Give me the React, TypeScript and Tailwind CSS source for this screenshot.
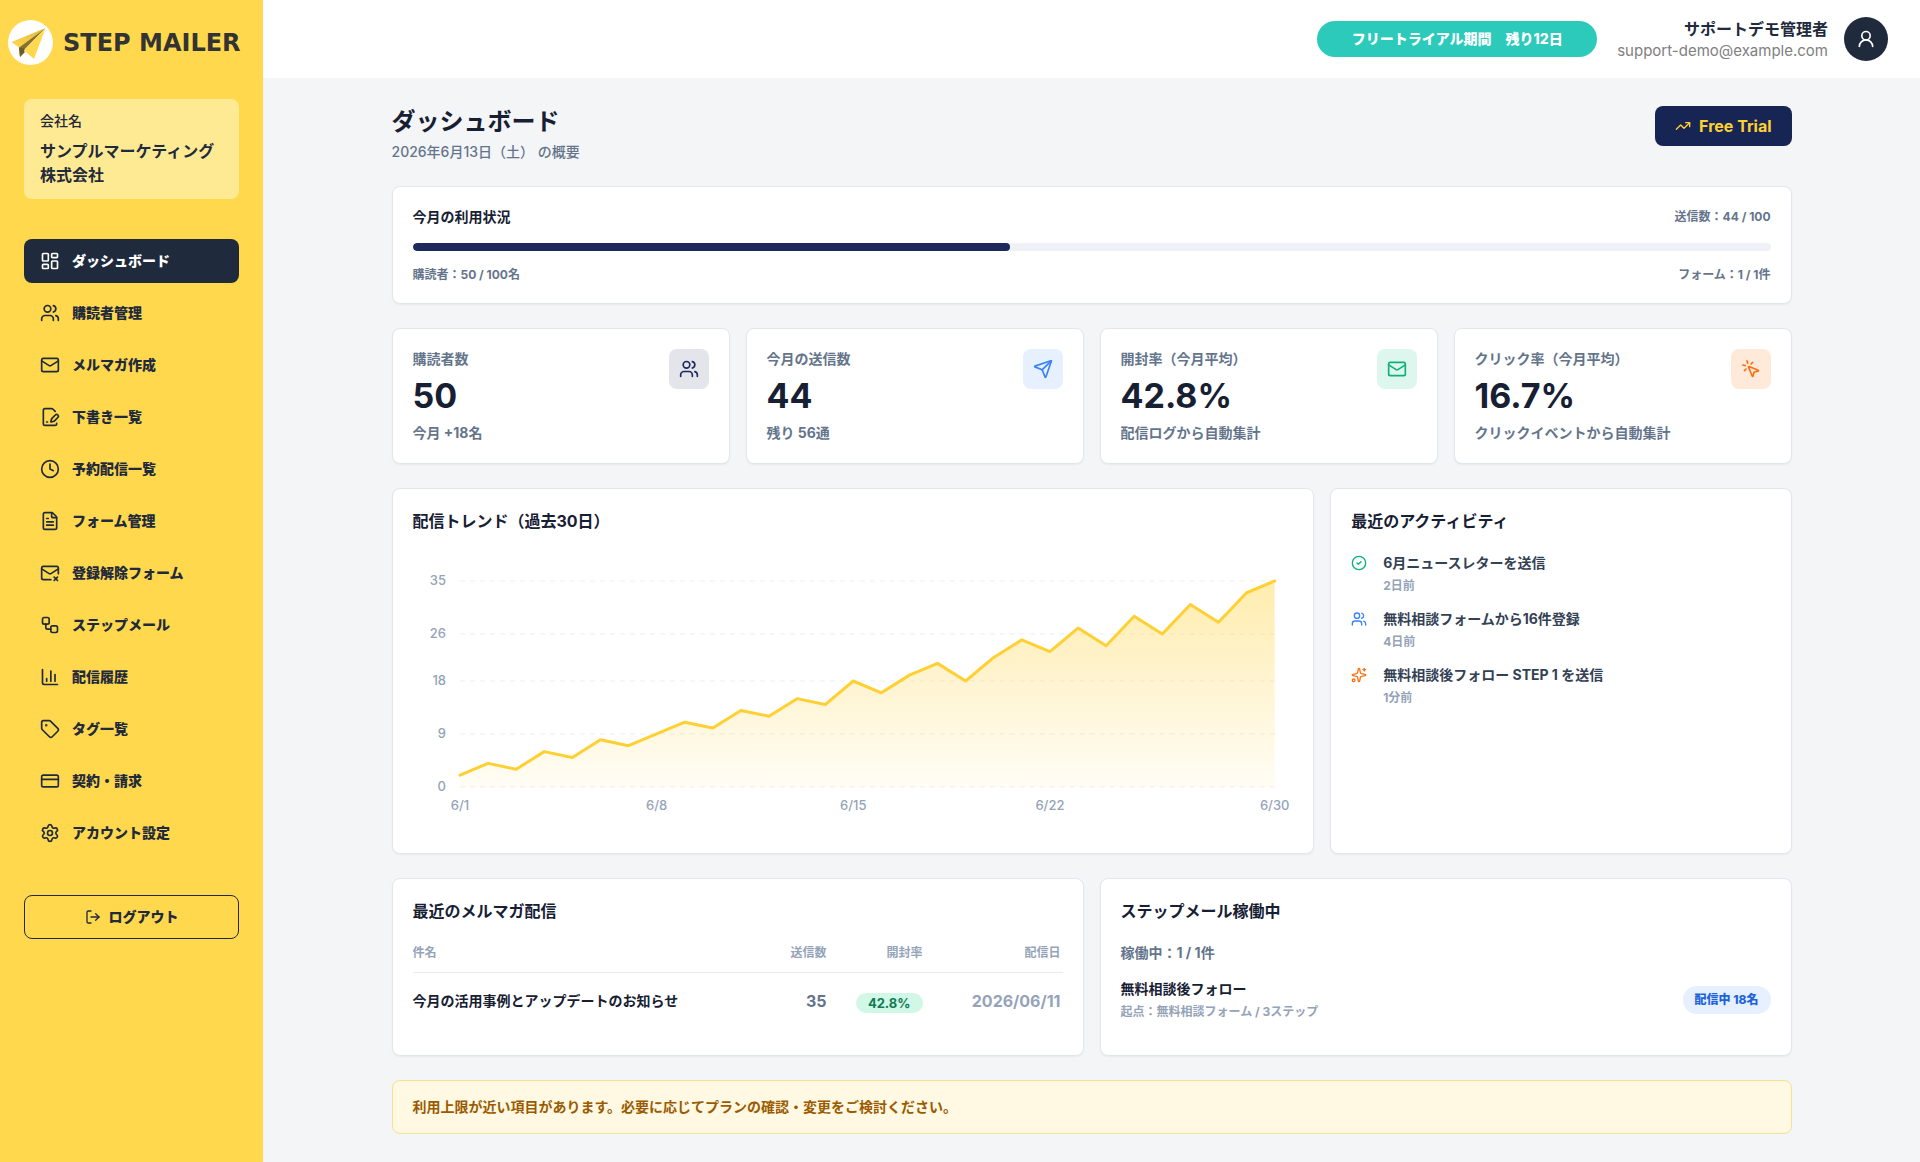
import {
  ChartColumn,
  CircleCheck,
  Clock,
  CreditCard,
  FilePenLine,
  FileText,
  LayoutDashboard,
  LogOut,
  Mail,
  MailX,
  MousePointerClick,
  Send,
  Settings,
  Sparkles,
  Tag,
  TrendingUp,
  UserRound,
  Users,
  Workflow,
} from 'lucide-react';

const navItems = [
  { icon: LayoutDashboard, label: 'ダッシュボード', path: '#dashboard' },
  { icon: Users, label: '購読者管理', path: '#subscribers' },
  { icon: Mail, label: 'メルマガ作成', path: '#compose' },
  { icon: FilePenLine, label: '下書き一覧', path: '#drafts' },
  { icon: Clock, label: '予約配信一覧', path: '#scheduled' },
  { icon: FileText, label: 'フォーム管理', path: '#forms' },
  { icon: MailX, label: '登録解除フォーム', path: '#unsubscribe' },
  { icon: Workflow, label: 'ステップメール', path: '#steps' },
  { icon: ChartColumn, label: '配信履歴', path: '#history' },
  { icon: Tag, label: 'タグ一覧', path: '#tags' },
  { icon: CreditCard, label: '契約・請求', path: '#billing' },
  { icon: Settings, label: 'アカウント設定', path: '#account' },
];

const stats = [
  { label: '購読者数', value: '50', note: '今月 +18名', icon: Users, tone: 'bg-[#e4e5eb] text-[#1e2a5e]' },
  { label: '今月の送信数', value: '44', note: '残り 56通', icon: Send, tone: 'bg-[#e6f0ff] text-[#3b82f6]' },
  { label: '開封率（今月平均）', value: '42.8%', note: '配信ログから自動集計', icon: Mail, tone: 'bg-[#def7ee] text-[#10b07a]' },
  { label: 'クリック率（今月平均）', value: '16.7%', note: 'クリックイベントから自動集計', icon: MousePointerClick, tone: 'bg-[#ffe9d9] text-[#f97316]' },
];

const activities = [
  { icon: CircleCheck, color: 'text-[#10b07a]', text: '6月ニュースレターを送信', time: '2日前' },
  { icon: Users, color: 'text-[#3b82f6]', text: '無料相談フォームから16件登録', time: '4日前' },
  { icon: Sparkles, color: 'text-[#f97316]', text: '無料相談後フォロー STEP 1 を送信', time: '1分前' },
];

const trend = [
  2, 4, 3, 6, 5, 8, 7, 9, 11, 10, 13, 12, 15, 14, 18, 16, 19, 21, 18, 22, 25, 23, 27, 24, 29, 26, 31, 28, 33, 35,
];

const usage = { sent: 44, limit: 100 };

const card = 'rounded-lg border border-[#e2e6ee] bg-white p-5 shadow-xs';

function Logo() {
  return (
    <a href="#dashboard" className="flex items-center gap-2.5 px-2 text-[#333333]">
      <svg viewBox="0 0 45 45" className="size-[45px] shrink-0" aria-hidden="true">
        <defs>
          <linearGradient id="wing" x1="0" y1="1" x2="1" y2="0">
            <stop offset="0%" stopColor="#ffd84d" />
            <stop offset="100%" stopColor="#e3b93c" />
          </linearGradient>
        </defs>
        <circle cx="22.5" cy="22.5" r="22.5" fill="#ffffff" />
        <path d="M37.500 8 3.500 22l7.500 5.500z" fill="url(#wing)" />
        <path d="M37.500 8 11 27.500l1 9.500 4.500-7.500z" fill="#8a7424" />
        <path d="m11 27.500 1 9.500 4.500-4.500v-4z" fill="#6b5c2a" />
        <path d="M37.500 8 16 30.500 26 39z" fill="#ffd84d" />
      </svg>
      <span className="font-['DejaVu_Sans',sans-serif] text-2xl leading-8 font-bold whitespace-nowrap">STEP MAILER</span>
    </a>
  );
}

function Sidebar() {
  return (
    <aside className="flex w-[263px] shrink-0 flex-col bg-[#ffd84d] pt-5 text-[#1f2a3c]">
      <Logo />

      <div className="mx-6 mt-[34px] rounded-lg bg-[#ffea94] px-4 py-3">
        <p className="text-sm font-medium">会社名</p>
        <p className="mt-2 text-base font-bold">サンプルマーケティング株式会社</p>
      </div>

      <nav className="mx-6 mt-10 flex flex-col gap-2">
        {navItems.map((item, i) => (
          <a
            key={item.path}
            href={item.path}
            aria-current={i === 0 ? 'page' : undefined}
            className={`flex h-11 items-center gap-3 rounded-lg px-4 text-sm font-extrabold ${
              i === 0 ? 'bg-[#1f2a3c] text-white' : 'hover:bg-[#ffea94]'
            }`}
          >
            <item.icon size={20} />
            {item.label}
          </a>
        ))}
      </nav>

      <button
        type="button"
        className="mx-6 mt-10 flex h-11 items-center justify-center gap-2 rounded-lg border border-[#1f2a3c] text-sm font-extrabold"
      >
        <LogOut size={16} />
        ログアウト
      </button>
    </aside>
  );
}

function Header() {
  return (
    <header className="flex h-[78px] items-center justify-end bg-white px-8">
      <p className="mr-5 min-w-[280px] rounded-full bg-[#2bcaba] px-8 py-2 text-center text-sm font-extrabold text-white">
        フリートライアル期間　残り12日
      </p>
      <div className="mr-4 text-right">
        <p className="text-base font-bold text-[#1f2a3c]">サポートデモ管理者</p>
        <p className="text-[15px] leading-5 text-[#808080]">support-demo@example.com</p>
      </div>
      <button
        type="button"
        aria-label="アカウント"
        className="flex size-11 items-center justify-center rounded-full bg-[#1f2a3c] text-white"
      >
        <UserRound size={20} />
      </button>
    </header>
  );
}

function UsageCard() {
  return (
    <section className={card}>
      <div className="flex items-center justify-between">
        <h2 className="text-sm font-bold">今月の利用状況</h2>
        <p className="text-xs font-bold text-[#64748b]">
          送信数：{usage.sent} / {usage.limit}
        </p>
      </div>
      <div className="my-4 h-2 overflow-hidden rounded-full bg-[#eff1f6]">
        <div className="h-full rounded-full bg-[#1e2a5e]" style={{ width: `${(usage.sent / usage.limit) * 100}%` }} />
      </div>
      <div className="flex items-center justify-between text-xs font-bold text-[#64748b]">
        <p>購読者：50 / 100名</p>
        <p>フォーム：1 / 1件</p>
      </div>
    </section>
  );
}

function TrendChart() {
  const left = 47;
  const right = 862;
  const bottom = 234;
  const y = (v: number) => bottom - (v * 206) / 35;
  const x = (i: number) => left + (i * (right - left)) / (trend.length - 1);
  const points = trend.map((v, i) => `${x(i)},${y(v)}`).join(' ');

  return (
    <svg viewBox="0 0 881 280" className="mt-5 block h-auto w-full" role="img" aria-label="配信トレンド">
      <defs>
        <linearGradient id="trend-fill" x1="0" y1="0" x2="0" y2="1">
          <stop offset="0%" stopColor="#ffd033" stopOpacity="0.4" />
          <stop offset="100%" stopColor="#ffd033" stopOpacity="0.05" />
        </linearGradient>
      </defs>
      {[35, 26, 18, 9, 0].map((v) => (
        <g key={v}>
          <line x1={left} x2={right} y1={y(v)} y2={y(v)} stroke="#eceef2" strokeDasharray="5 5" />
          <text x="33" y={y(v) + 4} textAnchor="end" fontSize="13" fontWeight="500" fill="#94a3b8">
            {v}
          </text>
        </g>
      ))}
      <polygon points={`${left},${bottom} ${points} ${right},${bottom}`} fill="url(#trend-fill)" />
      <polyline points={points} fill="none" stroke="#ffd033" strokeWidth="3" strokeLinejoin="round" strokeLinecap="round" />
      {[1, 8, 15, 22, 30].map((day) => (
        <text key={day} x={x(day - 1)} y="257" textAnchor="middle" fontSize="13" fontWeight="500" fill="#94a3b8">
          6/{day}
        </text>
      ))}
    </svg>
  );
}

function RecentMails() {
  return (
    <section className={card}>
      <h2 className="text-base font-bold">最近のメルマガ配信</h2>
      <table className="mt-5 mb-1.5 w-full">
        <thead>
          <tr className="h-[30px] border-b border-[#e8eaef] align-top text-xs leading-5 text-[#94a3b8]">
            <th className="text-left font-bold">件名</th>
            <th className="w-24 text-right font-bold">送信数</th>
            <th className="w-24 text-right font-bold">開封率</th>
            <th className="w-[140px] pr-0.5 text-right font-bold">配信日</th>
          </tr>
        </thead>
        <tbody>
          <tr className="h-14">
            <td className="text-sm font-bold">今月の活用事例とアップデートのお知らせ</td>
            <td className="text-right font-bold text-[#64748b]">35</td>
            <td className="text-right">
              <span className="inline-block rounded-full bg-[#d1f7e6] px-3 py-0.5 align-middle text-[13px] leading-4 font-bold text-[#0f7a55]">
                42.8%
              </span>
            </td>
            <td className="pr-0.5 text-right font-bold text-[#94a3b8]">2026/06/11</td>
          </tr>
        </tbody>
      </table>
    </section>
  );
}

function StepMails() {
  return (
    <section className={card}>
      <h2 className="text-base font-bold">ステップメール稼働中</h2>
      <p className="mt-5 text-sm font-bold text-[#64748b]">稼働中：1 / 1件</p>
      <div className="mt-4 flex items-center justify-between">
        <div>
          <p className="text-sm font-bold">無料相談後フォロー</p>
          <p className="mt-1 text-xs leading-[18px] font-bold text-[#94a3b8]">起点：無料相談フォーム / 3ステップ</p>
        </div>
        <span className="rounded-full bg-[#e6f0ff] px-3 py-1.5 text-xs font-extrabold text-[#1d64d8]">配信中 18名</span>
      </div>
    </section>
  );
}

export default function App() {
  return (
    <div className="flex min-h-screen bg-[#f4f5f7] font-['Inter','Noto_Sans_CJK_JP',sans-serif] text-[#172033]" lang="ja">
      <Sidebar />

      <div className="min-w-0 flex-1">
        <Header />

        <main className="mx-auto flex max-w-[1400px] flex-col gap-6 py-7">
          {/* Page title */}
          <div className="flex items-start justify-between">
            <div>
              <h1 className="text-2xl font-bold">ダッシュボード</h1>
              <p className="mt-1 text-sm font-medium text-[#64748b]">2026年6月13日（土） の概要</p>
            </div>
            <button
              type="button"
              className="flex h-10 items-center gap-2 rounded-lg bg-[#172554] px-5 text-base font-bold text-[#ffd033]"
            >
              <TrendingUp size={16} />
              Free Trial
            </button>
          </div>

          <UsageCard />

          {/* Stat cards */}
          <div className="grid grid-cols-4 gap-4">
            {stats.map((stat) => (
              <section key={stat.label} className={`${card} flex items-start justify-between`}>
                <div>
                  <h2 className="text-sm font-bold text-[#64748b]">{stat.label}</h2>
                  <p className="my-[7px] text-[34px] leading-10 font-bold">{stat.value}</p>
                  <p className="text-sm font-bold text-[#64748b]">{stat.note}</p>
                </div>
                <div className={`flex size-10 shrink-0 items-center justify-center rounded-lg ${stat.tone}`}>
                  <stat.icon size={20} />
                </div>
              </section>
            ))}
          </div>

          <div className="grid grid-cols-[2fr_1fr] gap-4">
            <section className={card}>
              <h2 className="text-base font-bold">配信トレンド（過去30日）</h2>
              <TrendChart />
            </section>

            <section className={card}>
              <h2 className="text-base font-bold">最近のアクティビティ</h2>
              <ul className="mt-5 flex flex-col gap-3.5">
                {activities.map((activity) => (
                  <li key={activity.text} className="flex gap-4">
                    <activity.icon size={16} className={`mt-0.5 shrink-0 ${activity.color}`} />
                    <div>
                      <p className="text-sm font-bold text-[#334155]">{activity.text}</p>
                      <p className="mt-1 text-xs leading-[18px] font-bold text-[#94a3b8]">{activity.time}</p>
                    </div>
                  </li>
                ))}
              </ul>
            </section>
          </div>

          <div className="grid grid-cols-2 gap-4">
            <RecentMails />
            <StepMails />
          </div>

          <p className="rounded-lg border border-[#f9e08e] bg-[#fff8e3] px-5 py-4 text-sm font-bold text-[#9a5b00]">
            利用上限が近い項目があります。必要に応じてプランの確認・変更をご検討ください。
          </p>
        </main>
      </div>
    </div>
  );
}
